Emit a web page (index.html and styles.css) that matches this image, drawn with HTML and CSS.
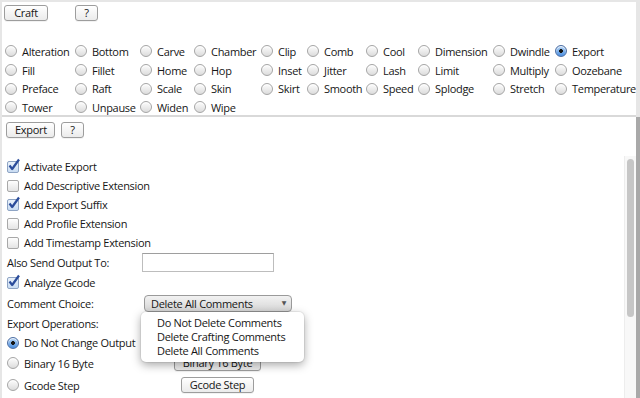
FILE: index.html
```html
<!DOCTYPE html>
<html>
<head>
    <title>Skeinforge Export</title>
    <link rel="stylesheet" href="styles.css">
</head>
<body>
    <div class="top-panel">
        <div class="tool-row">
            <button class="btn craft-btn">Craft</button>
            <button class="btn help-btn wide-gap">?</button>
        </div>

        <div class="plugin-grid">
            <label class="opt"><span class="radio"></span>Alteration</label>
            <label class="opt"><span class="radio"></span>Bottom</label>
            <label class="opt"><span class="radio"></span>Carve</label>
            <label class="opt"><span class="radio"></span>Chamber</label>
            <label class="opt"><span class="radio"></span>Clip</label>
            <label class="opt"><span class="radio"></span>Comb</label>
            <label class="opt"><span class="radio"></span>Cool</label>
            <label class="opt"><span class="radio"></span>Dimension</label>
            <label class="opt"><span class="radio"></span>Dwindle</label>
            <label class="opt"><span class="radio on"></span>Export</label>

            <label class="opt"><span class="radio"></span>Fill</label>
            <label class="opt"><span class="radio"></span>Fillet</label>
            <label class="opt"><span class="radio"></span>Home</label>
            <label class="opt"><span class="radio"></span>Hop</label>
            <label class="opt"><span class="radio"></span>Inset</label>
            <label class="opt"><span class="radio"></span>Jitter</label>
            <label class="opt"><span class="radio"></span>Lash</label>
            <label class="opt"><span class="radio"></span>Limit</label>
            <label class="opt"><span class="radio"></span>Multiply</label>
            <label class="opt"><span class="radio"></span>Oozebane</label>

            <label class="opt"><span class="radio"></span>Preface</label>
            <label class="opt"><span class="radio"></span>Raft</label>
            <label class="opt"><span class="radio"></span>Scale</label>
            <label class="opt"><span class="radio"></span>Skin</label>
            <label class="opt"><span class="radio"></span>Skirt</label>
            <label class="opt"><span class="radio"></span>Smooth</label>
            <label class="opt"><span class="radio"></span>Speed</label>
            <label class="opt"><span class="radio"></span>Splodge</label>
            <label class="opt"><span class="radio"></span>Stretch</label>
            <label class="opt"><span class="radio"></span>Temperature</label>

            <label class="opt"><span class="radio"></span>Tower</label>
            <label class="opt"><span class="radio"></span>Unpause</label>
            <label class="opt"><span class="radio"></span>Widen</label>
            <label class="opt"><span class="radio"></span>Wipe</label>
        </div>
    </div>

    <div class="bottom-panel">
        <div class="tool-row export-row">
            <button class="btn export-btn">Export</button>
            <button class="btn help-btn">?</button>
        </div>

        <div class="scroll-area">
            <div class="settings">
                <div class="row">
                    <span class="check on"><svg width="14" height="14" viewBox="0 0 14 14"><path d="M2.5 7.5 L5.2 11 L12 1.5" fill="none" stroke="#2b4c9b" stroke-width="2.2" stroke-linejoin="round"/></svg></span>
                    Activate Export
                </div>
                <div class="row"><span class="check"></span>Add Descriptive Extension</div>
                <div class="row">
                    <span class="check on"><svg width="14" height="14" viewBox="0 0 14 14"><path d="M2.5 7.5 L5.2 11 L12 1.5" fill="none" stroke="#2b4c9b" stroke-width="2.2" stroke-linejoin="round"/></svg></span>
                    Add Export Suffix
                </div>
                <div class="row"><span class="check"></span>Add Profile Extension</div>
                <div class="row"><span class="check"></span>Add Timestamp Extension</div>

                <div class="row field-row">
                    <span class="field-label">Also Send Output To:</span>
                    <input class="entry" type="text">
                </div>

                <div class="row tall">
                    <span class="check on"><svg width="14" height="14" viewBox="0 0 14 14"><path d="M2.5 7.5 L5.2 11 L12 1.5" fill="none" stroke="#2b4c9b" stroke-width="2.2" stroke-linejoin="round"/></svg></span>
                    Analyze Gcode
                </div>

                <div class="row tall">
                    <span class="field-label">Comment Choice:</span>
                    <div class="menu-wrap">
                        <div class="select">Delete All Comments<span class="arrow">&#9660;</span></div>
                        <div class="popup">
                            <div class="popup-item">Do Not Delete Comments</div>
                            <div class="popup-item">Delete Crafting Comments</div>
                            <div class="popup-item">Delete All Comments</div>
                        </div>
                    </div>
                </div>

                <div class="row">Export Operations:</div>
                <div class="row"><span class="radio on"></span>Do Not Change Output</div>
                <div class="row op-row">
                    <span class="field-label radio-label"><span class="radio"></span>Binary 16 Byte</span>
                    <div class="cell-center"><button class="btn">Binary 16 Byte</button></div>
                </div>
                <div class="row op-row">
                    <span class="field-label radio-label"><span class="radio"></span>Gcode Step</span>
                    <div class="cell-center"><button class="btn">Gcode Step</button></div>
                </div>
            </div>

            <div class="scrollbar">
                <div class="thumb"></div>
            </div>
        </div>
    </div>
</body>
</html>
```

FILE: styles.css
```css
body {
    margin: 0;
    font-family: "Open Sans", "DejaVu Sans", sans-serif;
    font-size: 11px;
    letter-spacing: -0.3px;
    color: #161616;
    background: #e6e6e6;
    height: 398px;
    overflow: hidden;
}

.top-panel {
    margin: 2px 4px 0 2px;
    height: 113px;
    background: #fff;
    border-bottom: 2px solid #d9d9d9;
    overflow: hidden;
}

.tool-row {
    display: flex;
    align-items: center;
    padding: 3px 0 0 2px;
    height: 16px;
}

.btn {
    height: 16px;
    padding: 0 8px;
    border: 1px solid #9d9d9d;
    border-radius: 3px;
    background: linear-gradient(#ffffff, #ebebeb);
    font-family: inherit;
    font-size: 11px;
    letter-spacing: -0.3px;
    color: #161616;
    line-height: 14px;
    box-shadow: 0 1px 0 rgba(0, 0, 0, 0.05);
}

.craft-btn {
    width: 44px;
}

.help-btn {
    width: 23px;
    padding: 0;
    margin-left: 6px;
}

.help-btn.wide-gap {
    margin-left: 27px;
}

.plugin-grid {
    display: grid;
    grid-template-columns: 70px 65px 54px 67px 46px 59px 52px 75px 62px auto;
    grid-auto-rows: 18.7px;
    padding: 21px 0 0 3px;
}

.opt {
    display: flex;
    align-items: center;
    white-space: nowrap;
}

.radio {
    flex: none;
    box-sizing: border-box;
    width: 12px;
    height: 12px;
    margin-right: 5px;
    border-radius: 50%;
    border: 1px solid #a5a5a5;
    background: linear-gradient(#fdfdfd, #dcdcdc);
    box-shadow: inset 0 1px 1px rgba(255, 255, 255, 0.9);
}

.radio.on {
    border-color: #4d6ea3;
    background: radial-gradient(circle, #151515 0 1.6px, transparent 2.2px), linear-gradient(#b7d6f6, #4a8ee0);
}

.bottom-panel {
    margin-left: 2px;
    height: 281px;
    background: #fff;
    border-right: 4px solid #a9a9a9;
}

.export-row {
    padding: 5px 0 0 4px;
}

.export-btn {
    width: 49px;
}

.scroll-area {
    display: flex;
    margin-top: 19px;
    height: 241px;
}

.settings {
    flex: 1;
    padding: 0 0 0 5px;
}

.row {
    display: flex;
    align-items: center;
    height: 19px;
    white-space: nowrap;
}

.row.tall {
    height: 21px;
}

.row.field-row {
    height: 20px;
}

.row.op-row {
    height: 22px;
}

.check {
    position: relative;
    flex: none;
    box-sizing: border-box;
    width: 12px;
    height: 12px;
    margin-right: 5px;
    border: 1px solid #a8a8a8;
    border-radius: 2px;
    background: linear-gradient(#fefefe, #e4e4e4);
}

.check.on {
    background: linear-gradient(#eaf2fb, #c9dcf2);
    border-color: #8ea4c4;
}

.check svg {
    position: absolute;
    left: -1px;
    top: -4px;
}

.field-label {
    width: 135px;
    flex: none;
}

.radio-label {
    display: flex;
    align-items: center;
}

.entry {
    box-sizing: border-box;
    width: 132px;
    height: 19px;
    margin: 0;
    border: 1px solid #bdbdbd;
    border-top-color: #9e9e9e;
    background: #fff;
}

.menu-wrap {
    position: relative;
    width: 151px;
}

.select {
    position: relative;
    box-sizing: border-box;
    width: 148px;
    height: 17px;
    margin-left: 2px;
    padding-left: 6px;
    border: 1px solid #9a9a9a;
    border-radius: 4px;
    background: linear-gradient(#f2f2f2, #d6d6d6);
    line-height: 15px;
}

.arrow {
    position: absolute;
    right: 5px;
    top: 0;
    font-size: 6px;
    color: #555;
}

.popup {
    position: absolute;
    left: -1px;
    top: 17px;
    width: 163px;
    height: 50px;
    padding-top: 4px;
    box-sizing: border-box;
    background: #fff;
    border-radius: 5px;
    box-shadow: 0 3px 10px rgba(0, 0, 0, 0.35), 0 0 0 1px rgba(0, 0, 0, 0.06);
    z-index: 2;
}

.popup-item {
    height: 14px;
    line-height: 14px;
    padding-left: 16px;
}

.cell-center {
    width: 151px;
    display: flex;
    justify-content: center;
}

.scrollbar {
    flex: none;
    width: 11px;
    height: 260px;
    margin-top: -1px;
    background: #f8f8f8;
    border-left: 1px solid #ededed;
}

.thumb {
    width: 7px;
    height: 158px;
    margin: 3px 0 0 2px;
    border-radius: 4px;
    background: #c6c6c6;
}
```
